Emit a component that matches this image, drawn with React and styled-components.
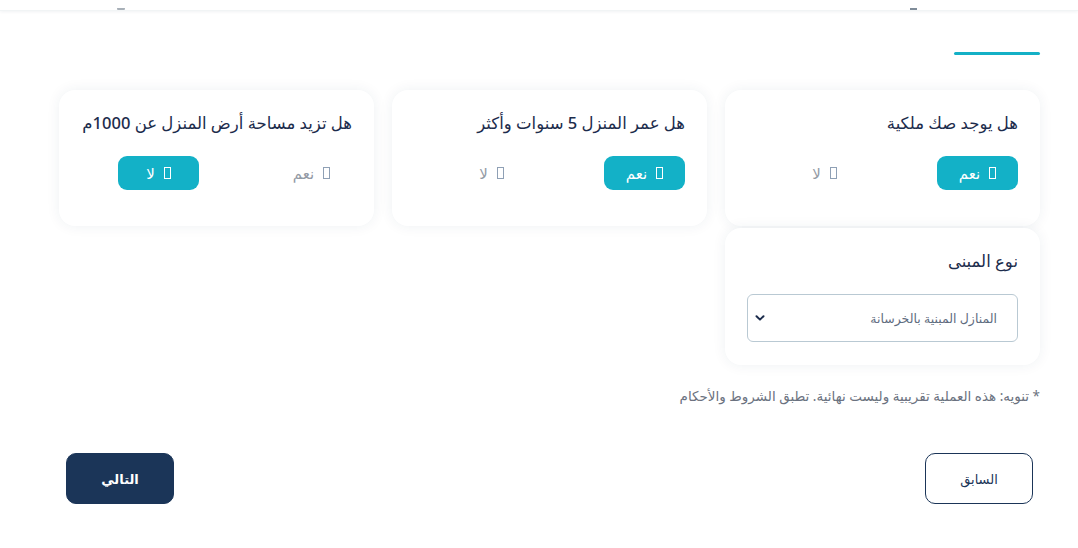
import React from "react";
import styled, { createGlobalStyle } from "styled-components";

const GlobalStyle = createGlobalStyle`
  html, body { margin: 0; padding: 0; background: #ffffff; }
  body {
    font-family: "Noto Sans", "DejaVu Sans", sans-serif;
    color: #1c2c4c;
  }
  * { box-sizing: border-box; }
`;

const Page = styled.div`
  direction: rtl;
  width: 1078px;
  min-height: 548px;
  background: #fff;
`;

const TopBar = styled.header`
  height: 11px;
  background: #fff;
  box-shadow: 0 1px 3px rgba(20, 40, 60, 0.06);
  border-bottom: 1px solid #f1f4f5;
  display: flex;
  justify-content: space-between;
  align-items: flex-end;
  padding: 0 161px 0 117px;
  overflow: hidden;
`;

const BarMark = styled.span`
  display: block;
  width: ${(p) => p.$w}px;
  height: 3px;
  margin-bottom: -1px;
  background: ${(p) => p.$c};
  border-radius: ${(p) => (p.$round ? "0 0 6px 6px" : "0")};
`;

const Main = styled.main`
  padding: 41px 38px 40px 59px;
`;

const Accent = styled.div`
  width: 86px;
  height: 3px;
  border-radius: 2px;
  background: #14b0c6;
`;

const Grid = styled.div`
  margin-top: 35px;
  display: grid;
  grid-template-columns: repeat(3, 1fr);
  column-gap: 18px;
  row-gap: 2px;
  align-items: start;
`;

const Card = styled.section`
  background: #fff;
  border-radius: 16px;
  box-shadow: 0 0 14px rgba(30, 60, 80, 0.07);
  padding: 22px 22px ${(p) => (p.$compact ? 23 : 36)}px;
`;

const Title = styled.h3`
  margin: 0;
  font-size: 16.5px;
  line-height: 22px;
  font-weight: 500;
  color: #1c2c4c;
  white-space: nowrap;
`;

const Options = styled.div`
  margin-top: 22px;
  display: flex;
  gap: 72px;
`;

const Option = styled.button`
  width: 81px;
  height: 34px;
  border: none;
  border-radius: 9px;
  display: flex;
  align-items: center;
  justify-content: center;
  gap: 9px;
  font-family: inherit;
  font-size: 15px;
  font-weight: 400;
  cursor: pointer;
  direction: rtl;
  background: ${(p) => (p.$active ? "#13b1c7" : "transparent")};
  color: ${(p) => (p.$active ? "#ffffff" : "#939aa5")};
`;

const GlyphBox = styled.span`
  display: inline-block;
  width: 7px;
  height: 12px;
  border: 1.3px solid ${(p) => (p.$active ? "#ffffff" : "#8fa0b5")};
`;

const SelectBox = styled.div`
  margin-top: 22px;
  height: 48px;
  border: 1px solid #b9c9d3;
  border-radius: 6px;
  display: flex;
  align-items: center;
  justify-content: space-between;
  padding: 0 20px 0 6px;
  font-size: 12.5px;
  color: #5f6c80;
`;

const Note = styled.p`
  margin: 21px 0 0;
  font-size: 13.5px;
  line-height: 20px;
  color: #6b7280;
`;

const Actions = styled.div`
  margin-top: 47px;
  padding: 0 7px;
  display: flex;
  justify-content: space-between;
`;

const NavButton = styled.button`
  width: 108px;
  height: 51px;
  border-radius: 10px;
  font-family: inherit;
  font-size: 13px;
  cursor: pointer;
  border: 1px solid #1b3558;
  background: ${(p) => (p.$primary ? "#1b3558" : "#ffffff")};
  color: ${(p) => (p.$primary ? "#ffffff" : "#1b3558")};
  font-weight: ${(p) => (p.$primary ? 600 : 400)};
`;

const Chevron = () => (
  <svg width="12" height="12" viewBox="0 0 12 12" fill="none">
    <path d="M2.5 4.2 L6 7.6 L9.5 4.2" stroke="#1c2c4c" strokeWidth="2" strokeLinecap="round" strokeLinejoin="round" />
  </svg>
);

const YesNo = ({ title, value }) => (
  <Card>
    <Title>{title}</Title>
    <Options>
      {["نعم", "لا"].map((label) => {
        const active = label === value;
        return (
          <Option key={label} $active={active}>
            <GlyphBox $active={active} />
            <span>{label}</span>
          </Option>
        );
      })}
    </Options>
  </Card>
);

export default function App() {
  return (
    <>
      <GlobalStyle />
      <Page>
        <TopBar>
          <BarMark $w={7} $c="#7f8c99" />
          <BarMark $w={8} $c="#a8b0b8" $round />
        </TopBar>
        <Main>
          <Accent />
          <Grid>
            <YesNo title="هل يوجد صك ملكية" value="نعم" />
            <YesNo title="هل عمر المنزل 5 سنوات وأكثر" value="نعم" />
            <YesNo title="هل تزيد مساحة أرض المنزل عن 1000م" value="لا" />
            <Card $compact>
              <Title>نوع المبنى</Title>
              <SelectBox>
                <span>المنازل المبنية بالخرسانة</span>
                <Chevron />
              </SelectBox>
            </Card>
          </Grid>
          <Note>* تنويه: هذه العملية تقريبية وليست نهائية. تطبق الشروط والأحكام</Note>
          <Actions>
            <NavButton>السابق</NavButton>
            <NavButton $primary>التالي</NavButton>
          </Actions>
        </Main>
      </Page>
    </>
  );
}
